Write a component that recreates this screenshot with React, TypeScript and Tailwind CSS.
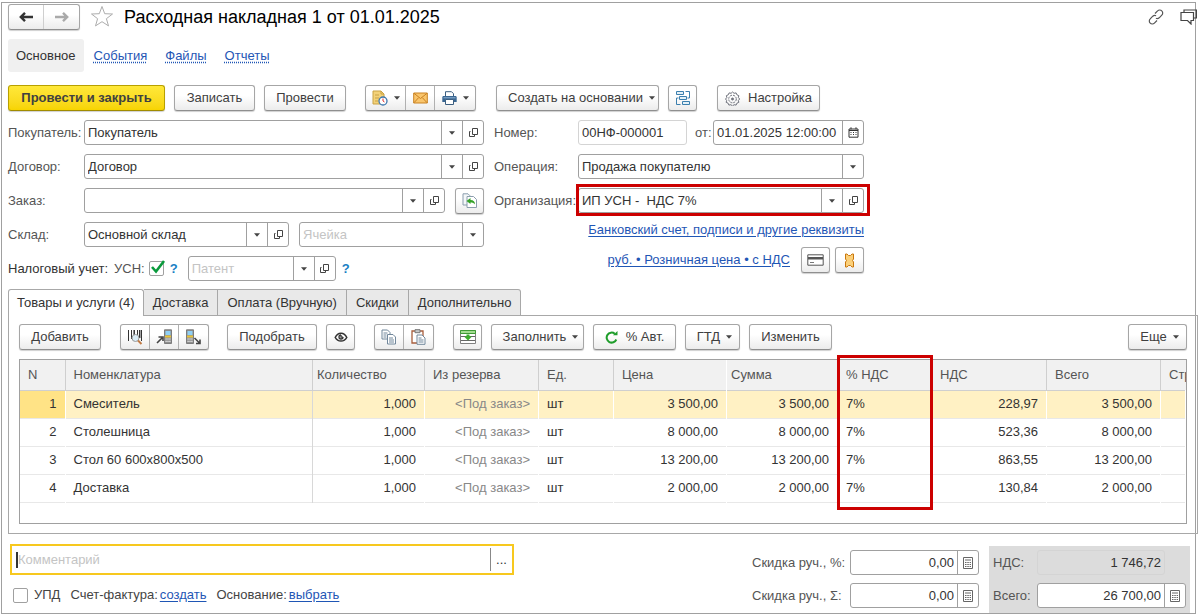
import React, { FC, ReactNode } from 'react'
import clsx from 'clsx'

const rows = [
  { name: 'Смеситель', price: '3 500,00', vat: '228,97' },
  { name: 'Столешница', price: '8 000,00', vat: '523,36' },
  { name: 'Стол 60 600х800х500', price: '13 200,00', vat: '863,55' },
  { name: 'Доставка', price: '2 000,00', vat: '130,84' }
]

const tabs = ['Доставка', 'Оплата (Вручную)', 'Скидки', 'Дополнительно']

const btnBase =
  'flex h-[26px] shrink-0 items-center justify-center rounded-[3px] border bg-linear-to-b shadow-[0_1px_1px_#d0d0d0]'
const btn = clsx(
  btnBase,
  'border-[#a6a6a6] border-b-[#8f8f8f] from-white from-40% to-[#ececec] text-[#404040]'
)
const btnPrimary = clsx(
  btnBase,
  'border-[#b8a000] border-b-[#a08b00] from-[#ffe838] to-[#f7d400] font-bold text-[#404040]'
)
const link = 'text-[#1f56b5] underline underline-offset-2'
const th = 'border-r border-[#cfcfcf] px-2 text-left font-normal text-[#555]'

/* ---------- icons ---------- */

const Caret = () => (
  <svg width="6" height="4" viewBox="0 0 6 4" className="shrink-0">
    <path d="M0 0.3h6L3 3.7z" fill="#444" />
  </svg>
)

const OpenIcon = () => (
  <svg width="11" height="11" viewBox="0 0 11 11" fill="none" stroke="#444">
    <path d="M4.5 1.5h5v6h-5z" />
    <path d="M2.5 4.500h-1v5h5V8" />
  </svg>
)

const ArrowIcon = ({ color, flip }: { color: string; flip?: boolean }) => (
  <svg
    width="14"
    height="12"
    viewBox="0 0 14 12"
    fill="none"
    stroke={color}
    strokeWidth="2.4"
    className={flip ? 'rotate-180' : ''}>
    <path d="M2 6H14M6 1.8L1.8 6L6 10.2" />
  </svg>
)

const StarIcon = () => (
  <svg width="24" height="24" viewBox="0 0 24 24" fill="none" stroke="#adadad">
    <path d="M12 1.5l2.7 7.200 7.800.300-6.100 4.700 2.100 7.200-6.500-4.200-6.500 4.200 2.100-7.200L1.500 9l7.800-.3z" />
  </svg>
)

const LinkIcon = () => (
  <svg width="16" height="16" viewBox="0 0 16 16" fill="none" stroke="#555" strokeWidth="1.2">
    <path d="M7 4.5l2.6-2.6a2.9 2.9 0 0 1 4.2 0 2.9 2.9 0 0 1 0 4.2L11.2 8.8a2.9 2.9 0 0 1-3.3.5" />
    <path d="M9 11.5l-2.6 2.6a2.9 2.9 0 0 1-4.2 0 2.9 2.9 0 0 1 0-4.2L4.8 7.2a2.9 2.9 0 0 1 3.3-.5" />
  </svg>
)

const ChatIcon = () => (
  <svg width="17" height="16" viewBox="0 0 17 16" fill="none" stroke="#444" strokeWidth="1.2">
    <path d="M4 3V1h12.400v8H14" />
    <path d="M1 3.500h12.500v8H11v3.500l-3.500-3.500H1z" />
  </svg>
)

const NoteClockIcon = () => (
  <svg width="16" height="16" viewBox="0 0 16 16" fill="none">
    <path d="M1 1h8l3 3v10H1z" fill="#f3d27a" stroke="#c9a244" />
    <path d="M9 1v3h3M3 5h4M3 8h4M3 11h3" stroke="#c9a244" />
    <circle cx="11" cy="11" r="4" fill="#fff" stroke="#3d76ad" strokeWidth="1.3" />
    <path d="M11 8.5V11l1.5 1" stroke="#d33" />
  </svg>
)

const MailIcon = () => (
  <svg width="15" height="12" viewBox="0 0 15 12" fill="none" stroke="#c98222">
    <path d="M.7 1h13.6v10H.7z" fill="#f9c56c" />
    <path d="M1 1.3l6.5 5.2L14 1.3M1 10.7l4.6-5M14 10.7l-4.6-5" />
  </svg>
)

const PrintIcon = () => (
  <svg width="15" height="14" viewBox="0 0 15 14">
    <path d="M3.5 5V.7h6l2 2V5" fill="#fff" stroke="#3c5f80" />
    <path d="M1 5h13l.7 1v5H.3V6z" fill="#3a6793" />
    <path d="M1.5 6.8h12" stroke="#8fb2d2" />
    <path d="M3.5 8.5h8v5h-8z" fill="#fff" stroke="#3c5f80" />
  </svg>
)

const TreeIcon = () => (
  <svg width="16" height="16" viewBox="0 0 16 16" fill="none" stroke="#3b7fae">
    <path d="M1.500 1.500h7v3h-7zM4.500 6.500h7v3h-7zM7.500 11.500h7v3h-7z" fill="#e3f0f7" />
    <path d="M10.500 1.500h4v6.500h-2M3.500 8h-2v6.500h4" />
  </svg>
)

const GearIcon = () => (
  <svg width="15" height="15" viewBox="0 0 15 15" fill="none" stroke="#6f727c">
    <path d="M7.500 1l1.600 1.300 2-.4.8 1.900 1.900.8-.4 2 1.300 1.400-1.300 1.400.4 2-1.900.8-.8 1.900-2-.4-1.600 1.300-1.600-1.300-2 .4-.8-1.900-1.900-.8.4-2L.500 8l1.300-1.400-.4-2 1.900-.8.8-1.900 2 .4z" />
    <circle cx="7.500" cy="8" r="3.800" strokeDasharray="2 1" />
    <circle cx="7.500" cy="8" r="1" fill="#6f727c" />
  </svg>
)

const FillDocIcon = () => (
  <svg width="16" height="15" viewBox="0 0 16 15" fill="none">
    <path d="M1 .8h5l2 2V12H1z" fill="#f4f7f9" stroke="#8b9dad" />
    <path d="M5 3.5h6.5l3 3v8H5z" fill="#fff" stroke="#8b9dad" />
    <path d="M4.5 8l4-3v2c3 0 4.5 1.500 4.500 4.500-1-1.500-2.500-2-4.500-2V11z" fill="#35a228" />
  </svg>
)

const CardIcon = () => (
  <svg width="17" height="12" viewBox="0 0 17 12">
    <path d="M.8.8h15.400v10.400H.8z" fill="#fff" stroke="#555" />
    <path d="M1 3h15v2.500H1z" fill="#555" />
    <path d="M3 8.500h4" stroke="#777" />
  </svg>
)

const TicketIcon = () => (
  <svg width="11" height="15" viewBox="0 0 11 15" fill="#fbd07a" stroke="#c9770c">
    <path d="M1.500 1h1.500l1.500 1.500h2L8 1h1.500v5L8.500 7.500l1 1.500v5H8l-1.500-1.500h-2L3 14H1.500V9l1-1.500-1-1.500z" />
  </svg>
)

const CalendarIcon = () => (
  <svg width="11" height="11" viewBox="0 0 11 11" fill="none" stroke="#333">
    <path d="M1 2h9v8.200H1zM1 3.500h9" />
    <path d="M3 .3v2M8 .3v2" />
    <path d="M2.500 5.500h6M2.500 7.500h6" strokeDasharray="1 1.500" />
  </svg>
)

const CalcIcon = () => (
  <svg width="10" height="12" viewBox="0 0 10 12" fill="none" stroke="#666">
    <path d="M.5.5h9v11h-9zM2 3h6" />
    <path d="M2 5.500h6M2 7.500h6M2 9.500h6" strokeDasharray="1.500 .8" />
  </svg>
)

const BarcodeIcon = () => (
  <svg width="16" height="16" viewBox="0 0 16 16" fill="none">
    <path d="M1.500 1v11M4.500 1v9M10.500 1v5M14.500 1v11" stroke="#333" />
    <path d="M7.200 1v5M12.700 1v8" stroke="#333" strokeWidth="1.500" />
    <circle cx="8.500" cy="9" r="3.500" fill="#d9ecf6" stroke="#999" />
    <path d="M11 11.500l3.500 3.500" stroke="#c07a45" strokeWidth="2" />
  </svg>
)

const TerminalIcon = ({ out }: { out?: boolean }) => (
  <svg width="17" height="16" viewBox="0 0 17 16" fill="none">
    <g transform={out ? 'translate(-7 0)' : ''}>
      <path d="M8.500.8h7V14.500h-7z" fill="#8f8f8f" stroke="#7c7c7c" />
      <path d="M9.500 2h5v4h-5z" fill="#8fd0f5" />
      <path d="M9 6.500h6v2H9z" fill="#e8c53b" />
      <path d="M9.500 10h5M9.500 12.300h5" stroke="#fff" strokeDasharray="1.200 .7" />
    </g>
    {out ? (
      <path d="M9.500 9l5 5M15 10.500V14.500h-4" stroke="#444" strokeWidth="1.600" />
    ) : (
      <path d="M1 14l5-5M2.500 8h4.500v4" stroke="#444" strokeWidth="1.600" />
    )}
  </svg>
)

const EyeIcon = () => (
  <svg width="14" height="10" viewBox="0 0 14 10" fill="none" stroke="#333" strokeWidth="1.500">
    <path d="M1.200 5.500C2.500 2.500 4.500 1.200 7 1.200S11.500 2.500 12.800 5.500C11.500 7.800 9.500 9 7 9S2.500 7.800 1.200 5.500z" />
    <path d="M7 3v2.200h2" strokeWidth="1.300" />
    <path d="M9 5a2 2 0 1 1-2-2" strokeWidth="1.300" />
  </svg>
)

const CopyIcon = () => (
  <svg width="16" height="16" viewBox="0 0 16 16" fill="#fff" stroke="#71879b">
    <path d="M1 1h5.500l2.500 2.500V10H1z" />
    <path d="M2.500 4h4M2.500 6h3M2.500 8h3" />
    <path d="M6.500 5.500h5.500l2.500 2.500v7h-8z" />
    <path d="M8 9h4M8 11h5M8 13h5" />
  </svg>
)

const PasteIcon = () => (
  <svg width="15" height="16" viewBox="0 0 15 16">
    <path d="M1 2h11v12H1z" fill="#fff" stroke="#a85e3c" strokeWidth="1.300" />
    <path d="M4 .7h5v3H4z" fill="#c9c9c9" stroke="#777" />
    <path d="M6 6h5l3 3v6.300H6z" fill="#fff" stroke="#71879b" />
    <path d="M7.500 9h3M7.500 11h5M7.500 13h5" stroke="#71879b" />
  </svg>
)

const GridFillIcon = () => (
  <svg width="16" height="14" viewBox="0 0 16 14" fill="none">
    <path d="M.5.5h15v13H.5z" fill="#fff" stroke="#808080" />
    <path d="M.5.5h15v3H.5z" fill="#a3dc91" stroke="#3f9a35" />
    <path d="M1 6.500h14M1 10.500h14" stroke="#666" />
    <path d="M6.500 4.500h3v2H12L8 10.500l-4-4h2.500z" fill="#3cae2c" />
  </svg>
)

const RefreshIcon = () => (
  <svg width="13" height="13" viewBox="0 0 13 13" fill="none" stroke="#1f9d2b" strokeWidth="2">
    <path d="M11.300 8.500A5 5 0 1 1 9.800 2.700" />
    <path d="M8 4.300h4.500V0z" fill="#1f9d2b" stroke="none" />
  </svg>
)

/* ---------- controls ---------- */

const Button: FC<{
  children: ReactNode
  className?: string
  title?: string
  primary?: boolean
}> = ({ children, className, title, primary }) => (
  <button
    type="button"
    aria-label={title}
    className={clsx(primary ? btnPrimary : btn, className)}>
    {children}
  </button>
)

const ButtonGroup: FC<{ children: ReactNode }> = ({ children }) => (
  <div className={clsx(btn, 'divide-x divide-[#b0b0b0]')}>{children}</div>
)

const GroupItem: FC<{ children: ReactNode; title: string; wide?: boolean }> = ({
  children,
  title,
  wide
}) => (
  <button
    type="button"
    aria-label={title}
    className={clsx('flex h-full items-center justify-center gap-1.5', wide ? 'w-10' : 'w-[29px]')}>
    {children}
  </button>
)

interface FieldProps {
  id: string
  label?: string
  value?: string
  placeholder?: string
  className?: string
  right?: boolean
  icons?: ('list' | 'open' | 'calendar' | 'calc')[]
}

const fieldIcons = {
  list: { title: 'Выбрать', icon: <Caret /> },
  open: { title: 'Открыть', icon: <OpenIcon /> },
  calendar: { title: 'Календарь', icon: <CalendarIcon /> },
  calc: { title: 'Калькулятор', icon: <CalcIcon /> }
}

const Field: FC<FieldProps> = ({
  id,
  label,
  value,
  placeholder,
  className = 'flex-1',
  right,
  icons = []
}) => (
  <div
    className={clsx(
      'flex h-[25px] min-w-0 rounded-[3px] border border-[#a0a0a0] bg-white',
      className
    )}>
    <input
      id={id}
      aria-label={label}
      defaultValue={value}
      placeholder={placeholder}
      className={clsx(
        'w-0 min-w-0 flex-1 bg-transparent px-[3px] text-[#333] outline-none placeholder:text-[#c4c4c4]',
        right && 'text-right'
      )}
    />
    {icons.map((name) => (
      <button
        key={name}
        type="button"
        aria-label={fieldIcons[name].title}
        className="flex w-[21px] shrink-0 items-center justify-center border-l border-[#a0a0a0]">
        {fieldIcons[name].icon}
      </button>
    ))}
  </div>
)

const Header = () => (
  <>
    <div className="flex h-6 items-center">
      <div className={clsx(btn, 'divide-x divide-[#cfcfcf]')}>
        <button type="button" aria-label="Назад" className="flex h-full w-[35px] items-center justify-center">
          <ArrowIcon color="#333" />
        </button>
        <button type="button" aria-label="Вперед" className="flex h-full w-[35px] items-center justify-center">
          <ArrowIcon color="#aaa" flip />
        </button>
      </div>
      <button type="button" aria-label="В избранное" className="ml-2.5">
        <StarIcon />
      </button>
      <h1 className="ml-2.5 flex-1 text-[18px] leading-6 text-black">
        Расходная накладная 1 от 01.01.2025
      </h1>
      <div className="-mr-2 flex items-center gap-4">
        <button type="button" aria-label="Ссылка">
          <LinkIcon />
        </button>
        <button type="button" aria-label="Обсуждения">
          <ChatIcon />
        </button>
      </div>
    </div>
    <nav className="mt-2.5 flex h-[33px] items-center gap-[18px] text-[#1f56b5]">
      <a href="#" className="-mr-2 flex h-full items-center rounded-[3px] bg-[#f0f0f0] px-2 text-[#333]">
        Основное
      </a>
      {['События', 'Файлы', 'Отчеты'].map((item) => (
        <a key={item} href="#" className="underline decoration-dotted underline-offset-2">
          {item}
        </a>
      ))}
    </nav>
  </>
)

const CommandBar = () => (
  <div className="mt-[13px] flex gap-[9px]">
    <Button className="w-[157px]" primary>
      Провести и закрыть
    </Button>
    <Button className="w-[81px]">Записать</Button>
    <Button className="mr-2.5 w-[82px]">Провести</Button>
    <ButtonGroup>
      <GroupItem title="Присоединенные файлы" wide>
        <NoteClockIcon />
        <Caret />
      </GroupItem>
      <GroupItem title="Отправить по почте">
        <MailIcon />
      </GroupItem>
      <GroupItem title="Печать" wide>
        <PrintIcon />
        <Caret />
      </GroupItem>
    </ButtonGroup>
    <Button className="ml-[11px] w-[163px] gap-1.5 pl-2">
      Создать на основании <Caret />
    </Button>
    <Button className="w-[29px]" title="Структура подчиненности">
      <TreeIcon />
    </Button>
    <Button className="ml-[11px] w-[103px] gap-2">
      <GearIcon /> Настройка
    </Button>
  </div>
)

const DetailsForm = () => (
  <div className="mt-[9px] grid grid-cols-[476fr_370fr_315fr] gap-x-2.5 text-[#555]">
    <div className="flex min-w-0 flex-col gap-[9px]">
      <div className="flex items-center">
        <label htmlFor="customer" className="w-[76px]">Покупатель:</label>
        <Field id="customer" value="Покупатель" icons={['list', 'open']} />
      </div>
      <div className="flex items-center">
        <label htmlFor="contract" className="w-[76px]">Договор:</label>
        <Field id="contract" value="Договор" icons={['list', 'open']} />
      </div>
      <div className="flex h-[25px] items-center">
        <label htmlFor="order" className="w-[76px]">Заказ:</label>
        <Field id="order" icons={['list', 'open']} />
        <Button className="ml-2.5 w-[29px]" title="Заполнить по заказу">
          <FillDocIcon />
        </Button>
      </div>
      <div className="flex items-center">
        <label htmlFor="store" className="w-[76px]">Склад:</label>
        <Field id="store" className="w-[205px]" value="Основной склад" icons={['list', 'open']} />
        <Field
          id="cell"
          label="Ячейка"
          className="ml-2.5 flex-1"
          placeholder="Ячейка"
          icons={['list']}
        />
      </div>
      <div className="flex items-center">
        <span className="w-[106px] text-[#333]">Налоговый учет:</span>
        <label htmlFor="usn">УСН:</label>
        <div className="relative ml-1 size-[15px]">
          <input
            id="usn"
            type="checkbox"
            defaultChecked
            className="peer block size-[15px] appearance-none rounded-[2px] border border-[#a0a0a0] bg-white"
          />
          <svg
            viewBox="0 0 16 14"
            className="pointer-events-none absolute -top-px left-px hidden h-[14px] w-4 peer-checked:block"
            fill="none"
            stroke="#0a9a3c"
            strokeWidth="2.600">
            <path d="M2 7l4 4.500L14 1" />
          </svg>
        </div>
        <a href="#" className="ml-1.5 w-[18px] font-bold text-[#1a7fc4]">?</a>
        <Field
          id="patent"
          label="Патент"
          className="w-[148px]"
          placeholder="Патент"
          icons={['list', 'open']}
        />
        <a href="#" className="ml-1.5 font-bold text-[#1a7fc4]">?</a>
      </div>
    </div>

    <div className="flex min-w-0 flex-col gap-[9px]">
      <div className="flex items-center">
        <label htmlFor="number" className="w-[84px]">Номер:</label>
        <Field id="number" className="flex-1 border-[#d4d4d4]" value="00НФ-000001" />
        <label htmlFor="date" className="ml-2 w-[18px]">от:</label>
        <Field id="date" className="w-[151px]" value="01.01.2025 12:00:00" icons={['calendar']} />
      </div>
      <div className="flex items-center">
        <label htmlFor="operation" className="w-[84px]">Операция:</label>
        <div className="relative flex h-[25px] flex-1 rounded-[3px] border border-[#a0a0a0] bg-white">
          <select id="operation" className="w-full appearance-none px-[3px] text-[#333] outline-none">
            <option>Продажа покупателю</option>
          </select>
          <span className="pointer-events-none absolute inset-y-0 right-0 flex w-[21px] items-center justify-center border-l border-[#a0a0a0]">
            <Caret />
          </span>
        </div>
      </div>
      <div className="flex items-center">
        <label htmlFor="company" className="w-[84px]">Организация:</label>
        <div className="relative flex flex-1">
          <Field id="company" value="ИП УСН -  НДС 7%" icons={['list', 'open']} />
          <div className="pointer-events-none absolute -top-1 -right-1.5 -bottom-[3px] -left-0.5 border-[3px] border-[#cc0000]" />
        </div>
      </div>
      <div className="flex h-4 items-center justify-end">
        <a href="#" className={link}>Банковский счет, подписи и другие реквизиты</a>
      </div>
      <div className="flex items-center justify-end gap-[5px]">
        <a href="#" className={clsx(link, 'mr-1.5')}>руб. • Розничная цена • с НДС</a>
        <Button className="w-[29px]" title="Оплата картой">
          <CardIcon />
        </Button>
        <Button className="w-[29px]" title="Чек">
          <TicketIcon />
        </Button>
      </div>
    </div>
  </div>
)

const ItemsTable = () => (
  <div className="mt-[9px] h-[165px] border border-[#a0a0a0]">
    <table className="w-full table-fixed border-collapse text-[#333]">
      <colgroup>
        <col className="w-[45px]" />
        <col />
        <col className="w-[112px]" />
        <col className="w-[114px]" />
        <col className="w-[75px]" />
        <col className="w-[113px]" />
        <col className="w-[111px]" />
        <col className="w-[94px]" />
        <col className="w-[115px]" />
        <col className="w-[114px]" />
        <col className="w-[25px]" />
      </colgroup>
      <thead>
        <tr className="h-[30px] border-b border-[#cfcfcf] bg-[#f1f1f1]">
          <th className={th}>N</th>
          <th className={th}>Номенклатура</th>
          <th className={clsx(th, 'pl-1')}>Количество</th>
          <th className={th}>Из резерва</th>
          <th className={th}>Ед.</th>
          <th className={clsx(th, 'border-white')}>Цена</th>
          <th className={clsx(th, 'border-white pl-1')}>Сумма</th>
          <th className={clsx(th, 'relative border-white')}>
            % НДС
            <div className="pointer-events-none absolute -top-[5px] -right-0.5 -left-px h-[155px] border-[3px] border-[#cc0000]" />
          </th>
          <th className={th}>НДС</th>
          <th className={th}>Всего</th>
          <th className="overflow-hidden pl-2 text-left font-normal whitespace-nowrap text-[#555]">Стр</th>
        </tr>
      </thead>
      <tbody>
        {rows.map((row, i) => (
          <tr
            key={row.name}
            className={clsx(
              'h-7 border-b border-[#e8e8e8] [&>td]:border-r [&>td]:border-white [&>td]:px-2',
              i === 0 && 'bg-[#fff1c4]'
            )}>
            <td className={clsx('text-right', i === 0 && 'bg-[#ffe386]')}>{i + 1}</td>
            <td className="border-r-[#d8d8d8]!">{row.name}</td>
            <td className="text-right">1,000</td>
            <td className="text-right text-[#888]">&lt;Под заказ&gt;</td>
            <td>шт</td>
            <td className="text-right">{row.price}</td>
            <td className="text-right">{row.price}</td>
            <td>7%</td>
            <td className="text-right">{row.vat}</td>
            <td className="text-right">{row.price}</td>
            <td />
          </tr>
        ))}
      </tbody>
    </table>
  </div>
)

const ItemsPanel = () => (
  <div className="mt-2 -mr-[9px]">
    <div className="relative z-10 -mb-px flex h-[27px]">
      <button type="button" className="rounded-t-[3px] border border-b-0 border-[#a8a8a8] bg-white px-2 text-[#333]">
        Товары и услуги (4)
      </button>
      {tabs.map((tab) => (
        <button
          key={tab}
          type="button"
          className="border border-l-0 border-[#a8a8a8] bg-[#e9e9e9] px-[9px] text-[#333] last:rounded-tr-[3px]">
          {tab}
        </button>
      ))}
    </div>
    <div className="border border-[#a8a8a8] px-2.5 pt-2 pb-[9px]">
      <div className="flex gap-[9px]">
        <Button className="mr-2.5 w-[82px]">Добавить</Button>
        <ButtonGroup>
          <GroupItem title="Поиск по штрихкоду">
            <BarcodeIcon />
          </GroupItem>
          <GroupItem title="Загрузить из ТСД">
            <TerminalIcon />
          </GroupItem>
          <GroupItem title="Выгрузить в ТСД">
            <TerminalIcon out />
          </GroupItem>
        </ButtonGroup>
        <Button className="ml-[9px] w-[90px]">Подобрать</Button>
        <Button className="mr-2.5 w-[29px]" title="Просмотр">
          <EyeIcon />
        </Button>
        <ButtonGroup>
          <GroupItem title="Копировать строки">
            <CopyIcon />
          </GroupItem>
          <GroupItem title="Вставить строки">
            <PasteIcon />
          </GroupItem>
        </ButtonGroup>
        <Button className="ml-2.5 w-[29px]" title="Заполнить таблицу">
          <GridFillIcon />
        </Button>
        <Button className="w-[93px] gap-1.5 pl-1.5">
          Заполнить <Caret />
        </Button>
        <Button className="w-[83px] gap-2">
          <RefreshIcon /> % Авт.
        </Button>
        <Button className="w-[55px] gap-1.5 pl-1">
          ГТД <Caret />
        </Button>
        <Button className="w-[83px]">Изменить</Button>
        <Button className="ml-auto w-[59px] gap-1.5 pl-1">
          Еще <Caret />
        </Button>
      </div>
      <ItemsTable />
    </div>
  </div>
)

const Footer = () => (
  <div className="mt-2.5 flex items-start justify-between pl-0.5">
    <div className="w-[504px]">
      <div className="flex h-[31px] items-center border-2 border-[#f7c81e] pl-1">
        <span className="h-4 w-0.5 bg-[#333]" />
        <input
          aria-label="Комментарий"
          placeholder="Комментарий"
          className="min-w-0 flex-1 bg-transparent outline-none placeholder:text-[#c4c4c4]"
        />
        <button
          type="button"
          aria-label="Открыть комментарий"
          className="flex h-[23px] w-[22px] items-center justify-center border-l border-[#888] text-[#333]">
          ...
        </button>
      </div>
      <div className="mt-3 flex items-center pl-[3px] text-[#444]">
        <input
          id="upd"
          type="checkbox"
          className="size-[15px] appearance-none rounded-[2px] border border-[#a0a0a0] bg-white checked:bg-[#0a9a3c]"
        />
        <label htmlFor="upd" className="ml-1.5">УПД</label>
        <span className="ml-2.5">Счет-фактура:</span>
        <a href="#" className={clsx(link, 'ml-0.5')}>создать</a>
        <span className="ml-2.5">Основание:</span>
        <a href="#" className={clsx(link, 'ml-0.5')}>выбрать</a>
      </div>
    </div>
    <div className="-mr-px flex text-[#555]">
      <div className="grid grid-cols-[98px_129px] content-start items-center gap-y-2 pt-1.5 pr-2.5">
        <label htmlFor="discount-percent">Скидка руч., %:</label>
        <Field id="discount-percent" value="0,00" right icons={['calc']} />
        <label htmlFor="discount-sum">Скидка руч., Σ:</label>
        <Field id="discount-sum" value="0,00" right icons={['calc']} />
      </div>
      <div className="mt-0.5 grid grid-cols-[44px_149px] content-start items-center gap-y-2 bg-[#dcdcdc] px-1 pt-1 pb-[5px]">
        <label htmlFor="vat-total">НДС:</label>
        <Field
          id="vat-total"
          className="mr-[21px] border-[#d4d4d4] bg-transparent!"
          value="1 746,72"
          right
        />
        <label htmlFor="total">Всего:</label>
        <Field id="total" value="26 700,00" right icons={['calc']} />
      </div>
    </div>
  </div>
)

export default function App() {
  return (
    <div className="bg-white pt-0.5 pr-1 pl-px font-['Liberation_Sans',Arial,sans-serif] text-[13px] leading-4">
      <main className="border border-[#a0a0a0] px-1.5 pt-0.5">
        <Header />
        <CommandBar />
        <DetailsForm />
        <ItemsPanel />
        <Footer />
      </main>
    </div>
  )
}
